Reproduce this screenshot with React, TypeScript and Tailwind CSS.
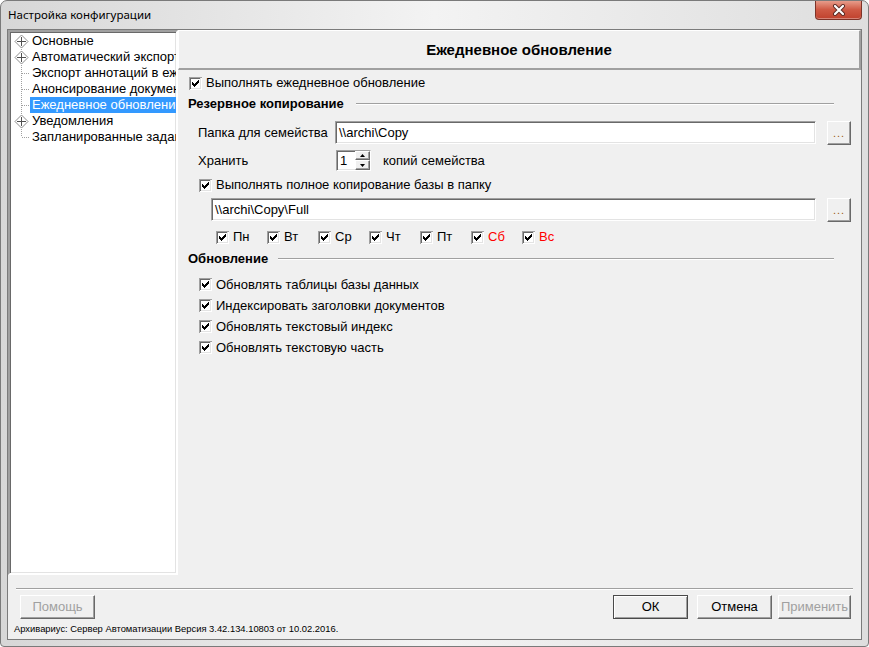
import React from "react"

const font = "font-['Liberation_Sans',Arial,sans-serif]"

// classic 3D check box with pixel check mark
function CheckBox() {
  const px: [number, number][] = [
    [9, 3], [8, 4], [9, 4], [3, 5], [7, 5], [8, 5], [9, 5],
    [3, 6], [4, 6], [6, 6], [7, 6], [8, 6], [3, 7], [4, 7], [5, 7], [6, 7], [7, 7],
    [4, 8], [5, 8], [6, 8], [5, 9],
  ]
  return (
    <svg width="13" height="13" viewBox="0 0 13 13" className="shrink-0" shapeRendering="crispEdges">
      <rect x="0" y="0" width="13" height="13" fill="#fff" />
      <path d="M0.5 13V0.5H13" stroke="#a0a0a0" fill="none" />
      <path d="M1.5 12V1.5H12" stroke="#696969" fill="none" />
      <path d="M1.5 11.5H11.5V1" stroke="#e3e3e3" fill="none" />
      {px.map(([x, y]) => (
        <rect key={`${x}-${y}`} x={x} y={y} width="1" height="1" fill="#000" />
      ))}
    </svg>
  )
}

function CheckRow({ label, red, className = "" }: { label: string; red?: boolean; className?: string }) {
  return (
    <div className={`flex items-center gap-[4px] ${className}`}>
      <CheckBox />
      <span className={red ? "text-[#ff0000]" : "text-black"}>{label}</span>
    </div>
  )
}

function Section({ title, gap }: { title: string; gap: string }) {
  return (
    <div className="flex items-center h-[16px] pl-[10px]">
      <span className="font-bold">{title}</span>
      <div className={`${gap} mr-[27px] flex-1 border-t border-t-[#a0a0a0] border-b border-b-white`} />
    </div>
  )
}

const sunken =
  "bg-white border border-t-[#a0a0a0] border-l-[#a0a0a0] border-b-white border-r-white shadow-[inset_1px_1px_0_#696969,inset_-1px_-1px_0_#e3e3e3]"
const raised =
  "bg-[#f0f0f0] border border-t-white border-l-white border-r-[#696969] border-b-[#696969] shadow-[inset_-1px_-1px_0_#a0a0a0]"

function PathField({ value, left }: { value: string; left: string }) {
  return (
    <div className={`flex items-center h-[23px] pr-[10px] ${left}`}>
      <div className={`flex-1 h-[23px] flex items-center pl-[3px] ${sunken}`}>{value}</div>
      <button className={`ml-[11px] w-[24px] h-[24px] flex items-center justify-center ${raised}`}>
        <span className="text-[11px] leading-none tracking-[1px] text-[#9a5a14] mt-[1px]">...</span>
      </button>
    </div>
  )
}

type Node = { label: string; kind: "expand" | "leaf"; pos: "first" | "mid" | "last"; selected?: boolean }

const tree: Node[] = [
  { label: "Основные", kind: "expand", pos: "first" },
  { label: "Автоматический экспорт", kind: "expand", pos: "mid" },
  { label: "Экспорт аннотаций в ежедневник", kind: "leaf", pos: "mid" },
  { label: "Анонсирование документов", kind: "leaf", pos: "mid" },
  { label: "Ежедневное обновление", kind: "leaf", pos: "mid", selected: true },
  { label: "Уведомления", kind: "expand", pos: "mid" },
  { label: "Запланированные задания", kind: "leaf", pos: "last" },
]

function TreeGlyph({ node }: { node: Node }) {
  const y1 = node.pos === "first" ? 8 : 0
  const y2 = node.pos === "last" ? 8 : 16
  return (
    <svg width="20" height="16" viewBox="0 0 20 16" className="shrink-0" shapeRendering="crispEdges">
      <line x1="11.5" y1={y1} x2="11.5" y2={y2} stroke="#a0a0a0" strokeDasharray="1 1" />
      {node.kind === "leaf" ? (
        <line x1="12" y1="8.5" x2="20" y2="8.5" stroke="#a0a0a0" strokeDasharray="1 1" />
      ) : (
        <g shapeRendering="auto">
          <path d="M11.5 2L18 8.5L11.5 15L5 8.5Z" fill="#fff" stroke="#8c8c8c" />
          <path d="M11.5 4V13M7 8.5H16" stroke="#505050" />
        </g>
      )}
    </svg>
  )
}

export default function App() {
  const days = ["Пн", "Вт", "Ср", "Чт", "Пт", "Сб", "Вс"]

  return (
    <div
      className={`w-[869px] h-[647px] flex flex-col overflow-hidden rounded-t-[7px] rounded-b-[4px] border border-[#7a7a7a] bg-linear-to-r from-[#d7d7d7] via-[#f3f3f3] to-[#dedede] text-[13px] text-black ${font}`}
    >
      {/* title bar */}
      <div className="h-[28px] flex items-start justify-between pl-[7px] pr-[6px] shrink-0">
        <span className="mt-[6px] text-[11.5px] leading-[16px] font-['Noto_Sans',sans-serif] text-black">
          Настройка конфигурации
        </span>
        <div className="-mt-[1px] w-[47px] h-[20px] rounded-b-[4px] border border-[#7d3328] border-t-0 bg-linear-to-b from-[#e8a393] via-[#cf5a45] to-[#c0412d] shadow-[inset_0_-1px_0_rgba(255,255,255,0.35)] flex items-center justify-center">
          <svg width="16" height="12" viewBox="0 0 16 12">
            <path d="M4 2L12 10M12 2L4 10" stroke="#5a2a24" strokeWidth="4" strokeLinecap="round" />
            <path d="M4 2L12 10M12 2L4 10" stroke="#fff" strokeWidth="2.2" strokeLinecap="round" />
          </svg>
        </div>
      </div>

      {/* client area */}
      <div className="mx-[6px] mb-[6px] flex-1 flex flex-col border border-[#7b7b7b] bg-[#f0f0f0]">
        <div className="h-[545px] flex shrink-0">
          {/* tree */}
          <div className="w-[170px] h-[545px] pt-[1px] bg-white border-2 border-t-[#a0a0a0] border-l-[#a0a0a0] border-b-white border-r-white shadow-[inset_1px_1px_0_#696969,inset_-1px_-1px_0_#e3e3e3] overflow-hidden">
            {tree.map((n) => (
              <div key={n.label} className="h-[16px] flex items-center whitespace-nowrap">
                <TreeGlyph node={n} />
                <span
                  className={`h-[16px] leading-[16px] px-[2px] ${n.selected ? "bg-[#3399ff] text-white" : ""}`}
                >
                  {n.label}
                </span>
              </div>
            ))}
          </div>

          {/* right panel */}
          <div className="flex-1 flex flex-col">
            <div className="h-[40px] shrink-0 flex items-center justify-center border border-t-white border-l-white border-r-2 border-b-2 border-r-[#a0a0a0] border-b-[#a0a0a0]">
              <span className="font-bold text-[15px] mt-[1px]">Ежедневное обновление</span>
            </div>

            <CheckRow label="Выполнять ежедневное обновление" className="mt-[3px] h-[20px] pl-[11px]" />
            <div className="mt-[3px]">
              <Section title="Резервное копирование" gap="ml-[12px]" />
            </div>

            <div className="mt-[9px] flex items-center">
              <span className="pl-[20px] w-[157px] shrink-0">Папка для семейства</span>
              <div className="flex-1">
                <PathField value="\\archi\Copy" left="" />
              </div>
            </div>

            <div className="mt-[6px] h-[21px] flex items-center">
              <span className="pl-[20px] w-[158px] shrink-0">Хранить</span>
              <div className={`w-[35px] h-[21px] flex ${sunken}`}>
                <span className="flex-1 pl-[3px] leading-[19px]">1</span>
                <div className="w-[15px] flex flex-col">
                  <div className={`h-[9px] flex items-center justify-center ${raised}`}>
                    <svg width="5" height="3" viewBox="0 0 5 3">
                      <path d="M2.5 0L5 3H0Z" fill="#000" />
                    </svg>
                  </div>
                  <div className={`h-[10px] flex items-center justify-center ${raised}`}>
                    <svg width="5" height="3" viewBox="0 0 5 3">
                      <path d="M0 0H5L2.5 3Z" fill="#000" />
                    </svg>
                  </div>
                </div>
              </div>
              <span className="ml-[12px]">копий семейства</span>
            </div>

            <CheckRow label="Выполнять полное копирование базы в папку" className="mt-[5px] h-[18px] pl-[21px]" />

            <div className="mt-[4px]">
              <PathField value="\\archi\Copy\Full" left="pl-[33px]" />
            </div>

            <div className="mt-[8px] h-[16px] flex pl-[38px]">
              {days.map((d, i) => (
                <CheckRow key={d} label={d} red={i > 4} className="w-[51px]" />
              ))}
            </div>

            <div className="mt-[6px]">
              <Section title="Обновление" gap="ml-[10px]" />
            </div>

            <div className="mt-[7px] flex flex-col pl-[21px]">
              {[
                "Обновлять таблицы базы данных",
                "Индексировать заголовки документов",
                "Обновлять текстовый индекс",
                "Обновлять текстовую часть",
              ].map((t) => (
                <CheckRow key={t} label={t} className="h-[21px]" />
              ))}
            </div>
          </div>
        </div>

        {/* footer */}
        <div className="mt-[13px] mx-[8px] border-t border-t-[#a0a0a0] border-b border-b-white" />
        <div className="mt-[5px] h-[24px] flex items-center pl-[12px] pr-[10px]">
          <button className={`w-[75px] h-[24px] text-[#a0a0a0] ${raised}`}>Помощь</button>
          <div className="flex-1" />
          <button className="w-[75px] h-[24px] bg-[#f0f0f0] border border-[#4a4a4a] shadow-[inset_1px_1px_0_#fff,inset_-1px_-1px_0_#a0a0a0]">
            ОК
          </button>
          <button className={`ml-[9px] w-[75px] h-[24px] ${raised}`}>Отмена</button>
          <button className={`ml-[6px] w-[73px] h-[24px] text-[#a0a0a0] ${raised}`}>Применить</button>
        </div>
        <div className="mt-[4px] pl-[6px] text-[9.4px] leading-[12px]">
          Архивариус: Сервер Автоматизации Версия 3.42.134.10803 от 10.02.2016.
        </div>
      </div>
    </div>
  )
}
